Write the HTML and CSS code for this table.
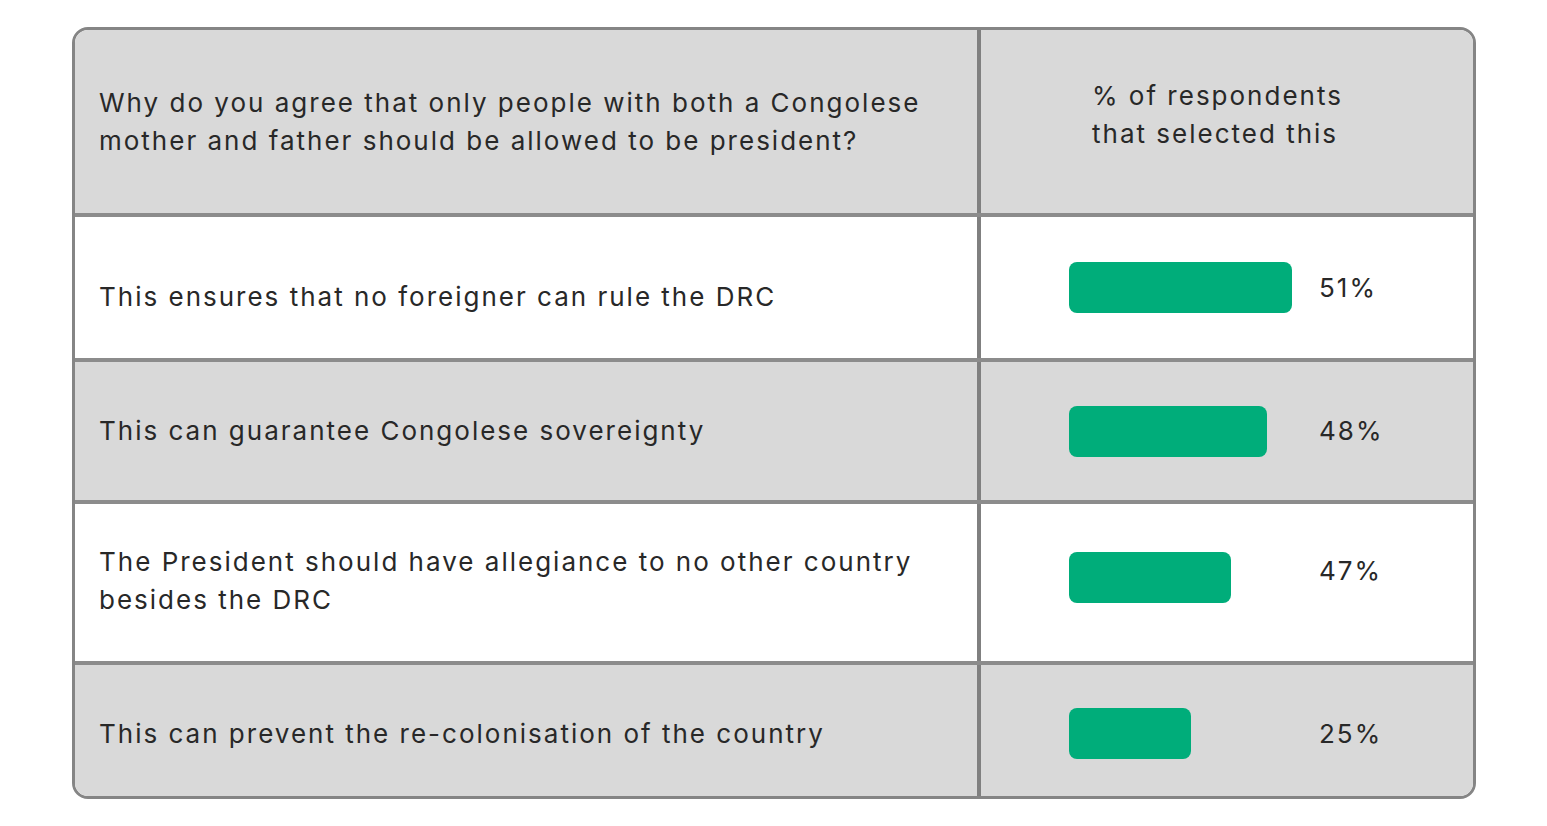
FILE: index.html
```html
<!DOCTYPE html>
<html lang="en">
<head>
<meta charset="utf-8">
<title>Survey table</title>
<link rel="stylesheet" href="styles.css">
</head>
<body>
<div class="table">
  <div class="row head">
    <div class="cell label">Why do you agree that only people with both a Congolese<br>mother and father should be allowed to be president?</div>
    <div class="cell value head-value">% of respondents<br>that selected this</div>
  </div>
  <div class="row white r1">
    <div class="cell label">This ensures that no foreigner can rule the DRC</div>
    <div class="cell value"><div class="track"><div class="bar" style="width:223px"></div></div><span class="pct">51%</span></div>
  </div>
  <div class="row grey r2">
    <div class="cell label">This can guarantee Congolese sovereignty</div>
    <div class="cell value"><div class="track"><div class="bar" style="width:198px"></div></div><span class="pct">48%</span></div>
  </div>
  <div class="row white r3">
    <div class="cell label">The President should have allegiance to no other country<br>besides the DRC</div>
    <div class="cell value"><div class="track"><div class="bar" style="width:162px"></div></div><span class="pct">47%</span></div>
  </div>
  <div class="row grey r4">
    <div class="cell label">This can prevent the re-colonisation of the country</div>
    <div class="cell value"><div class="track"><div class="bar" style="width:122px"></div></div><span class="pct">25%</span></div>
  </div>
</div>
</body>
</html>
```
FILE: styles.css
```css
html, body {
  margin: 0;
  padding: 0;
  background: #ffffff;
}
body {
  padding: 27px 0 0 72px;
  font-family: Inter, "Noto Sans", sans-serif;
  color: #282828;
}
.table {
  width: 1404px;
  box-sizing: border-box;
  border: 3px solid #858585;
  border-radius: 16px;
  overflow: hidden;
  display: flex;
  flex-direction: column;
}
.row {
  display: grid;
  grid-template-columns: 906px 1fr;
  border-bottom: 4px solid #8c8c8c;
}
.row:last-child { border-bottom: none; }
.head, .grey { background: #d9d9d9; }
.white { background: #ffffff; }
.head { height: 183px; }
.r1 { height: 141px; }
.r2 { height: 138px; }
.r3 { height: 157px; }
.r4 { height: 131px; }
.cell {
  display: flex;
  align-items: center;
}
.label {
  padding-left: 24px;
  font-size: 26px;
  line-height: 38px;
  letter-spacing: 2px;
  border-right: 4px solid #808080;
}
.value {
  padding-left: 88px;
}
.head-value {
  padding-left: 111px;
  padding-bottom: 14px;
  font-size: 26px;
  line-height: 38px;
  letter-spacing: 2px;
}
.r1 .label { padding-top: 18px; }
.r3 .label { padding-bottom: 4px; }
.r4 .label, .r4 .value { padding-top: 6px; }
.r3 .bar { margin-bottom: 11px; }
.r3 .pct { margin-bottom: 24px; }
.track {
  width: 250px;
  display: flex;
}
.bar {
  height: 51px;
  background: #00ad7a;
  border-radius: 8px;
}
.pct {
  font-size: 26px;
  line-height: 38px;
  letter-spacing: 2px;
}
```
